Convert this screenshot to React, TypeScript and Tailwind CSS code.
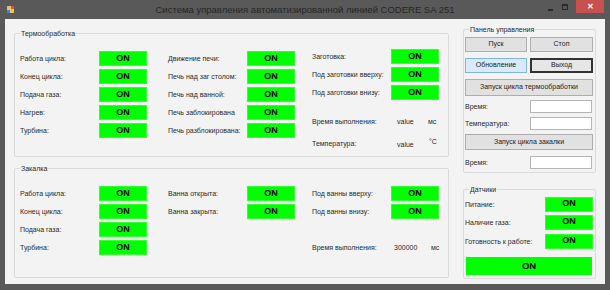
import type { ReactNode } from "react";

function Led({ wide = false }: { wide?: boolean }) {
  return (
    <div
      className={
        wide
          ? "flex h-[18px] w-[126px] items-center justify-center bg-[#00ff00] text-[9.5px] font-bold text-black"
          : "flex h-[15px] w-[48px] items-center justify-center border border-[#33ff33] bg-[#00ff00] text-[9px] font-bold text-black"
      }
    >
      ON
    </div>
  );
}

function Row({ label }: { label: string }) {
  return (
    <div className="flex h-[15px] items-center">
      <span className="w-[79px] pt-[2px]">{label}</span>
      <Led />
    </div>
  );
}

function Group({
  title,
  className,
  children,
}: {
  title: string;
  className: string;
  children: ReactNode;
}) {
  return (
    <div className={`relative rounded-[2px] border border-[#dadada] ${className}`}>
      <span className="absolute -top-[5px] left-[5px] bg-[#f3f3f3] px-[1px] text-[7px] leading-[9px]">
        {title}
      </span>
      {children}
    </div>
  );
}

function Btn({ label, className = "" }: { label: string; className?: string }) {
  return (
    <button
      type="button"
      className={`flex items-center justify-center border text-[7px] text-[#222] ${className}`}
    >
      {label}
    </button>
  );
}

export default function App() {
  return (
    <div className="flex h-[290px] w-[610px] flex-col bg-[#595959] font-['Liberation_Sans',Arial,sans-serif] text-[7px] text-[#2a2a2a]">
      {/* title bar */}
      <div className="grid h-[19px] grid-cols-[1fr_auto_1fr]">
        <div className="pl-[7px] pt-[6px]">
          <svg width="7" height="7" viewBox="0 0 7 7">
            <rect x="0" y="0" width="7" height="7" fill="#d8c9a0" />
            <rect x="0" y="0" width="3" height="3" fill="#f2c230" />
            <rect x="4" y="0" width="3" height="3" fill="#e05040" />
            <rect x="0" y="4" width="3" height="3" fill="#4a80d0" />
            <rect x="4" y="4" width="3" height="3" fill="#f2c230" />
          </svg>
        </div>
        <div className="pt-[3px] text-[9.5px] leading-[13px] text-[#262626]">
          Система управления автоматизированной линией CODERE SA 251
        </div>
        <div className="flex items-start justify-end pr-[6px]">
          <div className="mr-[9px] mt-[9px] h-[1.5px] w-[5px] bg-[#2a2a2a]" />
          <div className="mr-[8px] mt-[4px] h-[6px] w-[6px] border border-t-2 border-[#2a2a2a]" />
          <div className="flex h-[13px] w-[28px] items-center justify-center bg-[#c75050] text-[8px] font-bold leading-none text-white">
            ✕
          </div>
        </div>
      </div>

      {/* client area */}
      <div className="mx-[5px] mb-[6px] flex flex-1 items-start bg-[#f3f3f3] pl-[9px]">
        {/* left column */}
        <div className="flex w-[435px] flex-col pt-[14px]">
          <Group title="Термообработка" className="h-[124px]">
            <div className="flex pl-[5px] pt-[17px]">
              <div className="flex w-[148px] flex-col gap-[3px]">
                <Row label="Работа цикла:" />
                <Row label="Конец цикла:" />
                <Row label="Подача газа:" />
                <Row label="Нагрев:" />
                <Row label="Турбина:" />
              </div>
              <div className="flex w-[144px] flex-col gap-[3px]">
                <Row label="Движение печи:" />
                <Row label="Печь над заг столом:" />
                <Row label="Печь над ванной:" />
                <Row label="Печь заблокирована" />
                <Row label="Печь разблокирована:" />
              </div>
              <div className="-mt-[2px] flex flex-col gap-[3px]">
                <Row label="Заготовка:" />
                <Row label="Под заготовки вверху:" />
                <Row label="Под заготовки внизу:" />
                <div className="mt-[11px] flex h-[15px] items-center">
                  <span className="w-[79px] pt-[2px]">Время выполнения:</span>
                  <span className="w-[37px] pl-[6px] pt-[2px]">value</span>
                  <span className="pt-[2px]">мс</span>
                </div>
                <div className="mt-[4px] flex h-[15px] items-center">
                  <span className="w-[79px] pt-[2px]">Температура:</span>
                  <span className="w-[38px] pl-[6px] pt-[3px]">value</span>
                  <span className="pb-[2px]">°C</span>
                </div>
              </div>
            </div>
          </Group>

          <Group title="Закалка" className="mt-[11px] h-[110px]">
            <div className="flex pl-[5px] pt-[17px]">
              <div className="flex w-[148px] flex-col gap-[3px]">
                <Row label="Работа цикла:" />
                <Row label="Конец цикла:" />
                <Row label="Подача газа:" />
                <Row label="Турбина:" />
              </div>
              <div className="flex w-[144px] flex-col gap-[3px]">
                <Row label="Ванна открыта:" />
                <Row label="Ванна закрыта:" />
              </div>
              <div className="flex flex-col gap-[3px]">
                <Row label="Под ванны вверху:" />
                <Row label="Под ванны внизу:" />
                <div className="mt-[18px] flex h-[15px] items-center">
                  <span className="w-[79px] pt-[2px]">Время выполнения:</span>
                  <span className="w-[40px] pl-[3px] pt-[2px]">300000</span>
                  <span className="pt-[2px]">мс</span>
                </div>
              </div>
            </div>
          </Group>
        </div>

        {/* right column */}
        <div className="ml-[14px] flex w-[133px] flex-col pt-[10px]">
          <Group title="Панель управления" className="h-[144px]">
            <div className="flex flex-col pl-[1px] pr-[2px] pt-[7px]">
              <div className="flex h-[15px] gap-[3px]">
                <Btn label="Пуск" className="w-[62px] border-[#adadad] bg-[#e1e1e1]" />
                <Btn label="Стоп" className="w-[63px] border-[#adadad] bg-[#e1e1e1]" />
              </div>
              <div className="mt-[6px] flex h-[15px] gap-[3px]">
                <Btn label="Обновление" className="w-[62px] border-[#7eb4ea] bg-[#d9ebfb]" />
                <Btn label="Выход" className="w-[63px] border-2 border-[#333] bg-[#e6e6e6]" />
              </div>
              <Btn
                label="Запуск цикла термообработки"
                className="mt-[6px] h-[17px] border-[#adadad] bg-[#e1e1e1]"
              />
              <div className="mt-[4px] flex h-[13px] items-center">
                <span className="w-[65px] pt-[1px]">Время:</span>
                <div className="h-[13px] w-[62px] border border-[#b5b5b5] bg-white" />
              </div>
              <div className="mt-[4px] flex h-[13px] items-center">
                <span className="w-[65px] pt-[2px]">Температура:</span>
                <div className="h-[13px] w-[62px] border border-[#b5b5b5] bg-white" />
              </div>
              <Btn
                label="Запуск цикла закалки"
                className="mt-[4px] h-[16px] border-[#adadad] bg-[#e1e1e1]"
              />
              <div className="mt-[6px] flex h-[13px] items-center">
                <span className="w-[65px] pt-[1px]">Время:</span>
                <div className="h-[13px] w-[62px] border border-[#b5b5b5] bg-white" />
              </div>
            </div>
          </Group>

          <Group title="Датчики" className="mt-[16px] h-[90px]">
            <div className="flex flex-col pl-[1px] pr-[2px] pt-[7px]">
              <div className="flex h-[14px] items-center">
                <span className="w-[80px] pt-[3px]">Питание:</span>
                <Led />
              </div>
              <div className="mt-[4px] flex h-[14px] items-center">
                <span className="w-[80px] pt-[3px]">Наличие газа:</span>
                <Led />
              </div>
              <div className="mt-[5px] flex h-[14px] items-center">
                <span className="w-[80px] pt-[3px]">Готовность к работе:</span>
                <Led />
              </div>
              <div className="mt-[9px] pl-[1px]">
                <Led wide />
              </div>
            </div>
          </Group>
        </div>
      </div>
    </div>
  );
}
